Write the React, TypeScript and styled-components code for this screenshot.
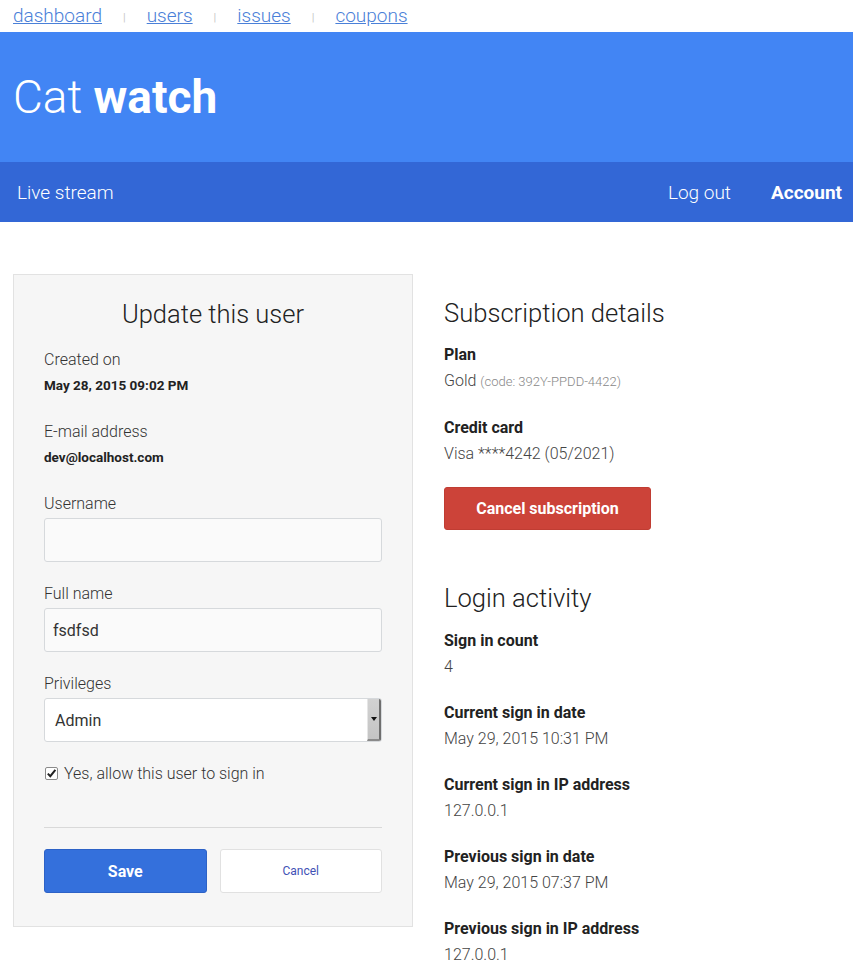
import React from 'react';
import styled, { createGlobalStyle } from 'styled-components';

const GlobalStyle = createGlobalStyle`
  html, body { margin: 0; padding: 0; background: #fff; }
  body { font-family: Roboto, "Noto Sans", sans-serif; color: #333; }
  * { box-sizing: border-box; }
`;

const TopNav = styled.nav`
  display: flex;
  align-items: center;
  height: 32px;
  padding: 0 13px;
`;

const TopLink = styled.a`
  font-size: 19px;
  font-weight: 300;
  color: #4a80d8;
  text-decoration: underline;
  line-height: 20px;
`;

const Sep = styled.span`
  font-size: 11px;
  color: #c8c8c8;
  margin: 2px 21px 0;
`;

const Banner = styled.header`
  height: 130px;
  background: #4285f4;
  display: flex;
  align-items: center;
  padding-left: 13px;
`;

const Brand = styled.h1`
  margin: 0;
  color: #fff;
  font-size: 46px;
  font-weight: 300;
  line-height: 56px;
  strong { font-weight: 700; }
`;

const SubNav = styled.div`
  height: 60px;
  background: #3367d6;
  display: flex;
  align-items: center;
  justify-content: space-between;
  padding: 0 11px 0 17px;
`;

const SubLinks = styled.div`
  display: flex;
  gap: 40px;
`;

const SubLink = styled.a<{ $bold?: boolean }>`
  color: #fff;
  font-size: 19px;
  font-weight: ${(p) => (p.$bold ? 700 : 300)};
  text-decoration: none;
`;

const Main = styled.main`
  display: flex;
  align-items: flex-start;
  gap: 31px;
  padding: 52px 13px 0;
`;

const Card = styled.section`
  width: 400px;
  background: #f6f6f6;
  border: 1px solid #e2e2e2;
  padding: 21px 30px 33px;
`;

const CardTitle = styled.h2`
  margin: 0 0 18px;
  text-align: center;
  font-size: 25.5px;
  font-weight: 300;
  line-height: 36px;
  color: #222;
`;

const FieldLabel = styled.div`
  font-size: 16px;
  font-weight: 300;
  line-height: 20px;
  color: #333;
`;

const StaticValue = styled.div`
  margin: 5px 0 27px;
  font-size: 13.5px;
  font-weight: 700;
  line-height: 20px;
  color: #222;
`;

const Group = styled.div`
  display: flex;
  flex-direction: column;
  gap: 4px;
  margin-bottom: 22px;
`;

const TextInput = styled.input`
  height: 44px;
  width: 100%;
  border: 1px solid #d6d9dc;
  border-radius: 3px;
  background: #fafafa;
  padding: 0 8px;
  font-family: Roboto, sans-serif;
  font-size: 16px;
  font-weight: 400;
  color: #333;
  outline: none;
`;

const SelectBox = styled.div`
  height: 44px;
  display: flex;
  align-items: stretch;
  border: 1px solid #d6d9dc;
  border-radius: 3px;
  background: #fff;
  overflow: hidden;
`;

const SelectText = styled.span`
  flex: 1;
  display: flex;
  align-items: center;
  padding-left: 10px;
  font-size: 16px;
  font-weight: 400;
  color: #333;
`;

const SelectArrow = styled.span`
  width: 14px;
  display: flex;
  align-items: center;
  justify-content: center;
  background: linear-gradient(#d2d2d2, #c4c4c4);
  border-left: 1px solid #e6e6e6;
  border-right: 2px solid #6e6e6e;
  border-bottom: 2px solid #8a8a8a;
  &::after {
    content: '';
    border-left: 3px solid transparent;
    border-right: 3px solid transparent;
    border-top: 4px solid #111;
  }
`;

const CheckRow = styled.label`
  display: flex;
  align-items: center;
  gap: 5px;
  padding-left: 1px;
  margin-top: 1px;
  font-size: 16px;
  font-weight: 300;
  line-height: 20px;
  color: #333;
`;

const Divider = styled.hr`
  margin: 43px 0 21px;
  border: 0;
  border-top: 1px solid #d9d9d9;
`;

const ButtonRow = styled.div`
  display: grid;
  grid-template-columns: 1fr 1fr;
  gap: 13px;
`;

const Button = styled.button<{ $variant: 'primary' | 'secondary' | 'danger' }>`
  height: 44px;
  border-radius: 3px;
  font-family: Roboto, sans-serif;
  cursor: pointer;
  ${(p) =>
    p.$variant === 'primary'
      ? `background:#3470dc;border:1px solid #2d62c6;color:#fff;font-size:16px;font-weight:700;`
      : p.$variant === 'danger'
      ? `background:#cc4339;border:1px solid #c03d33;color:#fff;font-size:16px;font-weight:700;width:207px;height:43px;`
      : `background:#fff;border:1px solid #e1e1e1;color:#3f51b5;font-size:12px;font-weight:400;`}
`;

const Side = styled.aside`
  padding-top: 21px;
  display: flex;
  flex-direction: column;
`;

const SideHeading = styled.h2<{ $top?: number; $mb?: number }>`
  margin: ${(p) => p.$top ?? 0}px 0 ${(p) => p.$mb ?? 14}px;
  font-size: 25.6px;
  font-weight: 300;
  line-height: 36px;
  color: #222;
`;

const Item = styled.div<{ $mb?: number }>`
  margin-bottom: ${(p) => p.$mb ?? 26}px;
`;

const ItemLabel = styled.div`
  font-size: 16px;
  font-weight: 700;
  line-height: 20px;
  color: #222;
`;

const ItemValue = styled.div`
  margin-top: 6px;
  font-size: 16px;
  font-weight: 300;
  line-height: 20px;
  color: #444;
`;

const Code = styled.small`
  font-size: 13px;
  color: #888;
`;

const CheckIcon = () => (
  <svg width="14" height="14" viewBox="0 0 14 14">
    <rect x="0.5" y="0.5" width="12" height="12" rx="1.5" fill="#fff" stroke="#8a8a8a" />
    <path d="M2.8 6.6 L5.3 9.2 L10.4 2.8" fill="none" stroke="#222" strokeWidth="2" />
  </svg>
);

const loginItems = [
  ['Sign in count', '4'],
  ['Current sign in date', 'May 29, 2015 10:31 PM'],
  ['Current sign in IP address', '127.0.0.1'],
  ['Previous sign in date', 'May 29, 2015 07:37 PM'],
  ['Previous sign in IP address', '127.0.0.1'],
];

export default function App() {
  return (
    <>
      <GlobalStyle />
      <TopNav>
        <TopLink href="#">dashboard</TopLink>
        <Sep>|</Sep>
        <TopLink href="#">users</TopLink>
        <Sep>|</Sep>
        <TopLink href="#">issues</TopLink>
        <Sep>|</Sep>
        <TopLink href="#">coupons</TopLink>
      </TopNav>
      <Banner>
        <Brand>
          Cat <strong>watch</strong>
        </Brand>
      </Banner>
      <SubNav>
        <SubLink href="#">Live stream</SubLink>
        <SubLinks>
          <SubLink href="#">Log out</SubLink>
          <SubLink href="#" $bold>
            Account
          </SubLink>
        </SubLinks>
      </SubNav>
      <Main>
        <Card>
          <CardTitle>Update this user</CardTitle>
          <FieldLabel>Created on</FieldLabel>
          <StaticValue>May 28, 2015 09:02 PM</StaticValue>
          <FieldLabel>E-mail address</FieldLabel>
          <StaticValue>dev@localhost.com</StaticValue>
          <Group>
            <FieldLabel>Username</FieldLabel>
            <TextInput defaultValue="" />
          </Group>
          <Group>
            <FieldLabel>Full name</FieldLabel>
            <TextInput defaultValue="fsdfsd" />
          </Group>
          <Group>
            <FieldLabel>Privileges</FieldLabel>
            <SelectBox>
              <SelectText>Admin</SelectText>
              <SelectArrow />
            </SelectBox>
          </Group>
          <CheckRow>
            <CheckIcon />
            Yes, allow this user to sign in
          </CheckRow>
          <Divider />
          <ButtonRow>
            <Button $variant="primary">Save</Button>
            <Button $variant="secondary">Cancel</Button>
          </ButtonRow>
        </Card>
        <Side>
          <SideHeading>Subscription details</SideHeading>
          <Item>
            <ItemLabel>Plan</ItemLabel>
            <ItemValue>
              Gold <Code>(code: 392Y-PPDD-4422)</Code>
            </ItemValue>
          </Item>
          <Item $mb={23}>
            <ItemLabel>Credit card</ItemLabel>
            <ItemValue>Visa ****4242 (05/2021)</ItemValue>
          </Item>
          <div>
            <Button $variant="danger">Cancel subscription</Button>
          </div>
          <SideHeading $top={50} $mb={15}>
            Login activity
          </SideHeading>
          {loginItems.map(([label, value]) => (
            <Item key={label}>
              <ItemLabel>{label}</ItemLabel>
              <ItemValue>{value}</ItemValue>
            </Item>
          ))}
        </Side>
      </Main>
    </>
  );
}
